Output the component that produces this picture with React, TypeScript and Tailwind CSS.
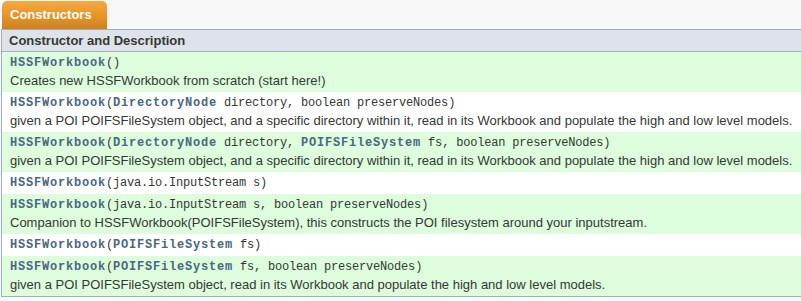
type Ctor = {
  name: string;
  params?: { type: string; link?: boolean; name: string }[];
  desc?: string;
};

const CTORS: Ctor[] = [
  { name: "HSSFWorkbook", params: [], desc: "Creates new HSSFWorkbook from scratch (start here!)" },
  {
    name: "HSSFWorkbook",
    params: [
      { type: "DirectoryNode", link: true, name: "directory" },
      { type: "boolean", name: "preserveNodes" },
    ],
    desc: "given a POI POIFSFileSystem object, and a specific directory within it, read in its Workbook and populate the high and low level models.",
  },
  {
    name: "HSSFWorkbook",
    params: [
      { type: "DirectoryNode", link: true, name: "directory" },
      { type: "POIFSFileSystem", link: true, name: "fs" },
      { type: "boolean", name: "preserveNodes" },
    ],
    desc: "given a POI POIFSFileSystem object, and a specific directory within it, read in its Workbook and populate the high and low level models.",
  },
  { name: "HSSFWorkbook", params: [{ type: "java.io.InputStream", name: "s" }] },
  {
    name: "HSSFWorkbook",
    params: [
      { type: "java.io.InputStream", name: "s" },
      { type: "boolean", name: "preserveNodes" },
    ],
    desc: "Companion to HSSFWorkbook(POIFSFileSystem), this constructs the POI filesystem around your inputstream.",
  },
  { name: "HSSFWorkbook", params: [{ type: "POIFSFileSystem", link: true, name: "fs" }] },
  {
    name: "HSSFWorkbook",
    params: [
      { type: "POIFSFileSystem", link: true, name: "fs" },
      { type: "boolean", name: "preserveNodes" },
    ],
    desc: "given a POI POIFSFileSystem object, read in its Workbook and populate the high and low level models.",
  },
];

const mono = "font-['Liberation_Mono',monospace] text-[12px] tracking-[-0.2px]";
const linkCls = "font-bold text-[#4a6782] tracking-[0.8px]";

function Signature({ c }: { c: Ctor }) {
  return (
    <div className={`${mono} leading-[18px] text-[#353833] whitespace-nowrap`}>
      <span className={linkCls}>{c.name}</span>
      (
      {c.params?.map((p, i) => (
        <span key={i}>
          {i > 0 && ", "}
          {p.link ? <span className={linkCls}>{p.type}</span> : p.type}
          {" " + p.name}
        </span>
      ))}
      )
    </div>
  );
}

export default function App() {
  return (
    <div className="w-[801px] h-[301px] bg-[#f8f8f8] pt-px font-['Liberation_Sans',Arial,sans-serif] overflow-hidden">
      <div className="ml-[2px] w-[105px] h-[28px] rounded-t-[5px] bg-gradient-to-b from-[#f4a942] via-[#e8962a] to-[#d0811c] text-white font-bold text-[13px] leading-[28px] pl-[8px]">
        Constructors
      </div>
      <div className="ml-px border-l border-t border-b border-[#9eadc0]">
        <div className="h-[22px] bg-[#dee3e9] border-b border-[#9eadc0] pl-[7px] text-[13px] font-bold text-[#353833] leading-[22px]">
          Constructor and Description
        </div>
        {CTORS.map((c, i) => (
          <div
            key={i}
            className={`${i % 2 === 0 ? "bg-[#ddfddd]" : "bg-white"} py-[2px] pl-[8px] whitespace-nowrap`}
          >
            <Signature c={c} />
            {c.desc && (
              <div className="text-[13px] leading-[18px] text-[#353833]">{c.desc}</div>
            )}
          </div>
        ))}
      </div>
    </div>
  );
}
